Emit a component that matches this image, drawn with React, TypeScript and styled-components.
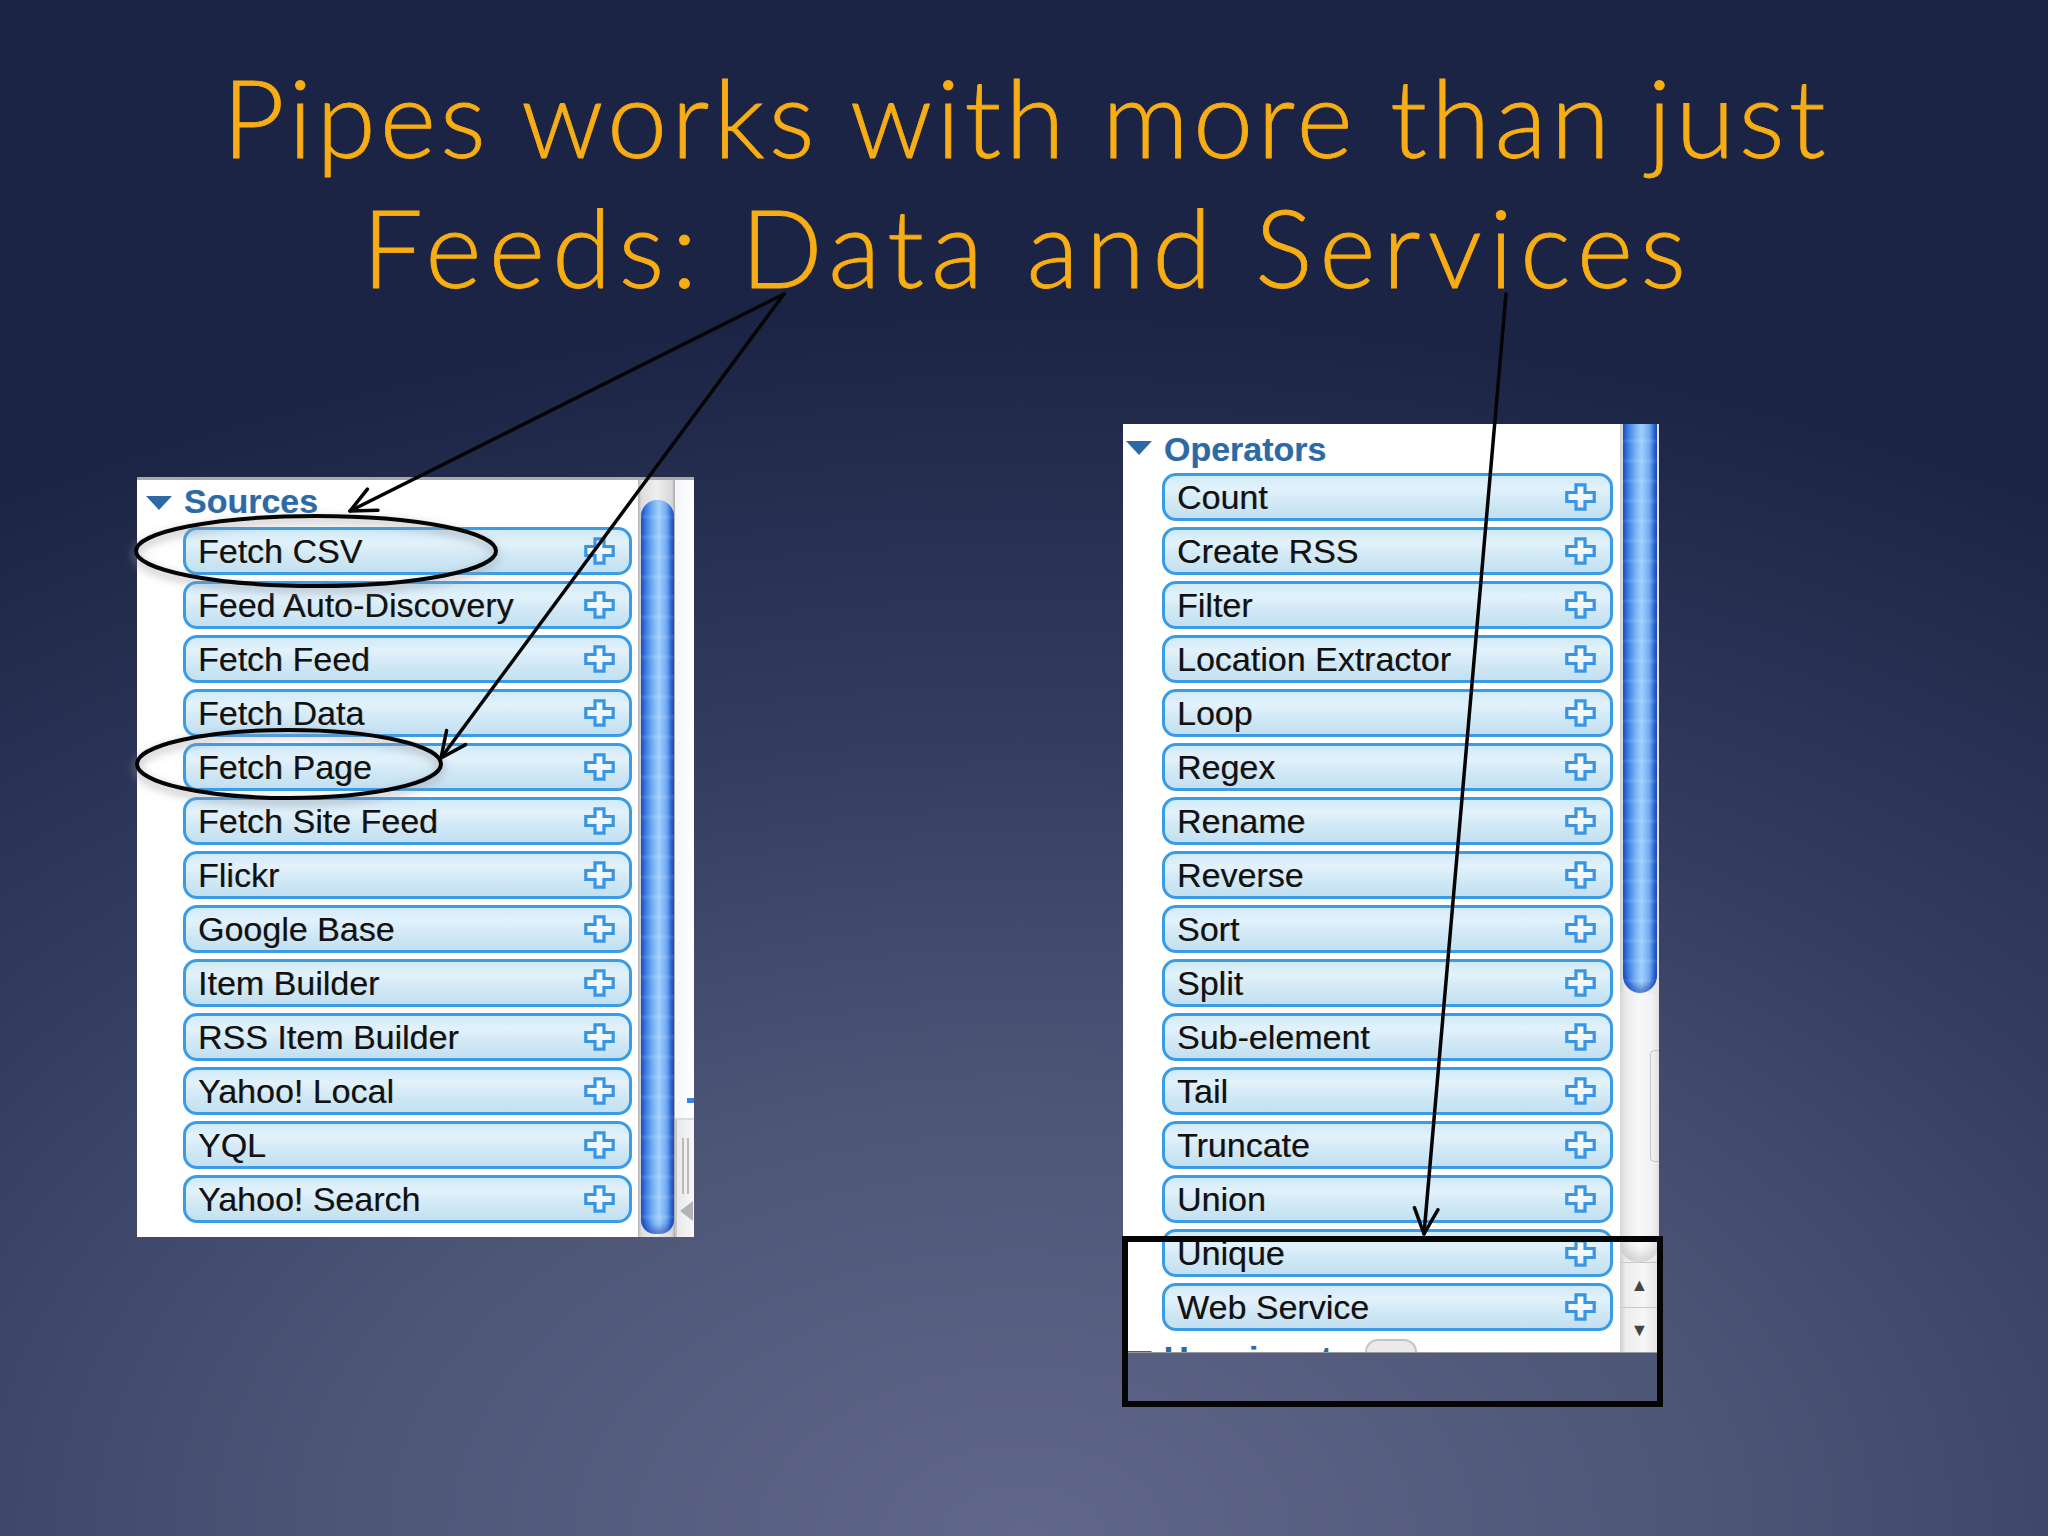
import React from "react";
import styled, { createGlobalStyle } from "styled-components";

const Global = createGlobalStyle`
  html, body { margin: 0; padding: 0; }
  body { width: 2048px; height: 1536px; overflow: hidden; background: #18203d; }
`;

const Slide = styled.div`
  position: relative;
  width: 2048px;
  height: 1536px;
  overflow: hidden;
  background:
    radial-gradient(ellipse 95% 80% at 50% 100%, #60678a 0%, #4e5678 35%, #343d60 65%, #1b2444 100%),
    #18203d;
  font-family: "Liberation Sans", Arial, sans-serif;
`;

const Title = styled.h1`
  margin: 0;
  padding-top: 51px;
  font-family: Lato, "Open Sans", sans-serif;
  font-weight: 300;
  font-size: 108px;
  line-height: 130px;
  color: #f7ad13;
  text-align: center;
  -webkit-text-stroke: 0.8px #f7ad13;
`;

const TitleLine = styled.span<{ $ls: number }>`
  display: block;
  letter-spacing: ${(p) => p.$ls}px;
  margin-right: -${(p) => p.$ls}px;
`;

const Content = styled.div`
  display: flex;
  align-items: flex-start;
  padding-left: 137px;
  margin-top: 113px;
`;

const Panel = styled.div<{ $mt: number; $ml: number; $w: number; $h: number; $left?: boolean }>`
  position: relative;
  box-sizing: border-box;
  display: flex;
  margin-top: ${(p) => p.$mt}px;
  margin-left: ${(p) => p.$ml}px;
  width: ${(p) => p.$w}px;
  height: ${(p) => p.$h}px;
  background: #ffffff;
  overflow: hidden;
  border-top: ${(p) => (p.$left ? "3px solid #a9a9ab" : "none")};
  border-bottom: ${(p) => (p.$left ? "none" : "1px solid #9a9aa0")};
`;

const List = styled.div<{ $pl: number; $pr: number }>`
  flex: 1;
  display: flex;
  flex-direction: column;
  padding-left: ${(p) => p.$pl}px;
  padding-right: ${(p) => p.$pr}px;
  min-width: 0;
`;

const Section = styled.div<{ $mt?: number }>`
  display: flex;
  flex-direction: column;
  margin-top: ${(p) => p.$mt ?? 0}px;
`;

const Header = styled.div<{ $h: number; $pt: number; $indent: number }>`
  display: flex;
  align-items: flex-start;
  gap: 12px;
  height: ${(p) => p.$h}px;
  box-sizing: border-box;
  padding-top: ${(p) => p.$pt}px;
  margin-left: ${(p) => p.$indent}px;
  font-weight: bold;
  font-size: 34px;
  line-height: 42px;
  color: #2d6aa4;
  text-shadow: 0 0 1px rgba(45, 106, 164, 0.4);
  white-space: nowrap;
`;

const Caret = styled.svg<{ $mt: number }>`
  flex: none;
  margin-top: ${(p) => p.$mt}px;
`;

const Rows = styled.div`
  display: flex;
  flex-direction: column;
  gap: 6px;
`;

const Row = styled.div`
  flex: none;
  box-sizing: border-box;
  height: 48px;
  display: flex;
  align-items: center;
  justify-content: space-between;
  padding: 0 14px 0 12px;
  border: 3px solid #3a9be6;
  border-radius: 14px;
  background: linear-gradient(180deg, #d1eaf8 0%, #e2f2fb 30%, #d2e9f6 60%, #c3e0f1 100%);
`;

const RowLabel = styled.span`
  font-size: 34px;
  line-height: 42px;
  color: #111111;
  white-space: nowrap;
  text-shadow: 0.6px 0 0 rgba(60, 45, 20, 0.45);
`;

const PlusIcon = styled.svg`
  flex: none;
  width: 31px;
  height: 28px;
`;

/* left scrollbar */
const LeftScroll = styled.div`
  flex: none;
  width: 56px;
  display: flex;
`;

const LeftTrack = styled.div`
  width: 37px;
  box-sizing: border-box;
  padding: 20px 1px 3px 3px;
  display: flex;
  background: linear-gradient(90deg, #b4b4b6 0%, #dedede 10%, #eeeeee 50%, #d8d8d8 92%, #a8a8a8 100%);
`;

const Thumb = styled.div<{ $radius: string }>`
  flex: 1;
  border-radius: ${(p) => p.$radius};
  background:
    repeating-linear-gradient(180deg, rgba(255, 255, 255, 0) 0px, rgba(255, 255, 255, 0) 14px, rgba(255, 255, 255, 0.12) 17px, rgba(255, 255, 255, 0) 20px),
    linear-gradient(90deg, #1f58c8 0%, #3c7de2 14%, #80b9f6 40%, #9fd0fc 55%, #6ea8f0 78%, #2f6bd6 92%, #1d52bd 100%);
  box-shadow: inset 0 -6px 6px rgba(10, 40, 160, 0.45);
`;

const SideStrip = styled.div`
  flex: 1;
  display: flex;
  flex-direction: column;
  justify-content: flex-end;
  background: linear-gradient(90deg, #f3f6f9 0%, #ffffff 100%);
`;

const BlueMark = styled.div`
  height: 5px;
  margin: 0 0 15px 12px;
  background: #3b82e6;
`;

const Grip = styled.div`
  position: relative;
  height: 119px;
  box-sizing: border-box;
  border-left: 2px solid #c9c9c9;
  border-top: 2px solid #dcdcdc;
  background: linear-gradient(90deg, #e9e9e9, #f7f7f7);
  display: flex;
  justify-content: center;
  gap: 3px;
  padding-top: 18px;
`;

const GripLine = styled.div`
  width: 2px;
  height: 56px;
  background: #b9b9b9;
`;

const GripArrow = styled.div`
  position: absolute;
  left: 3px;
  bottom: 16px;
  width: 0;
  height: 0;
  border-top: 10px solid transparent;
  border-bottom: 10px solid transparent;
  border-right: 13px solid #b3b3b3;
`;

/* right scrollbar */
const RightScroll = styled.div`
  flex: none;
  width: 39px;
  display: flex;
  flex-direction: column;
  background: linear-gradient(90deg, #cfcfcf 0%, #ececec 15%, #f7f7f7 60%, #e2e2e2 100%);
`;

const RightThumbWrap = styled.div`
  height: 569px;
  display: flex;
  padding-left: 3px;
  padding-right: 2px;
`;

const Trough = styled.div`
  position: relative;
  flex: 1;
  border-radius: 0 0 18px 18px;
  background: linear-gradient(90deg, #e4e4e4 0%, #f8f8f8 50%, #eeeeee 100%);
  box-shadow: inset 0 -8px 8px rgba(0, 0, 0, 0.12);
`;

const SideCapsule = styled.div`
  position: absolute;
  right: 0;
  top: 57px;
  width: 8px;
  height: 110px;
  border: 1px solid #c4c4c4;
  border-right: none;
  border-radius: 5px 0 0 5px;
`;

const ArrowBtn = styled.div`
  height: 44px;
  display: flex;
  align-items: center;
  justify-content: center;
  border-top: 1px solid #c8c8c8;
  font-size: 18px;
  color: #444;
`;

const Tab = styled.div`
  position: absolute;
  left: 242px;
  bottom: 0;
  width: 52px;
  height: 13px;
  box-sizing: border-box;
  border: 2px solid #c4c4c4;
  border-bottom: none;
  border-radius: 14px 14px 0 0;
  background: #eaeaea;
`;

const Overlay = styled.svg`
  position: absolute;
  left: 0;
  top: 0;
  pointer-events: none;
`;

const sources = [
  "Fetch CSV",
  "Feed Auto-Discovery",
  "Fetch Feed",
  "Fetch Data",
  "Fetch Page",
  "Fetch Site Feed",
  "Flickr",
  "Google Base",
  "Item Builder",
  "RSS Item Builder",
  "Yahoo! Local",
  "YQL",
  "Yahoo! Search",
];

const operators = [
  "Count",
  "Create RSS",
  "Filter",
  "Location Extractor",
  "Loop",
  "Regex",
  "Rename",
  "Reverse",
  "Sort",
  "Split",
  "Sub-element",
  "Tail",
  "Truncate",
  "Union",
  "Unique",
  "Web Service",
];

const Plus = () => (
  <PlusIcon viewBox="0 0 31 28">
    <defs>
      <linearGradient id="pg" x1="0" y1="0" x2="0" y2="1">
        <stop offset="0" stopColor="#ffffff" />
        <stop offset="1" stopColor="#e2effb" />
      </linearGradient>
    </defs>
    <polygon
      points="11,1.8 20,1.8 20,9.5 29.2,9.5 29.2,18.5 20,18.5 20,26.2 11,26.2 11,18.5 1.8,18.5 1.8,9.5 11,9.5"
      fill="url(#pg)"
      stroke="#3895e3"
      strokeWidth="3.2"
      strokeLinejoin="miter"
    />
  </PlusIcon>
);

const Tri = ({ mt }: { mt: number }) => (
  <Caret $mt={mt} width="26" height="14" viewBox="0 0 26 14">
    <polygon points="0,0 26,0 13,14" fill="#2d6aa4" />
  </Caret>
);

const ItemRow = ({ label }: { label: string }) => (
  <Row>
    <RowLabel>{label}</RowLabel>
    <Plus />
  </Row>
);

function arrowHead(tx: number, ty: number, fx: number, fy: number, len = 28, spread = 25) {
  const back = Math.atan2(fy - ty, fx - tx);
  const a = (spread * Math.PI) / 180;
  const p1 = [tx + len * Math.cos(back + a), ty + len * Math.sin(back + a)];
  const p2 = [tx + len * Math.cos(back - a), ty + len * Math.sin(back - a)];
  return `M${p1[0]},${p1[1]} L${tx},${ty} L${p2[0]},${p2[1]}`;
}

export default function App() {
  return (
    <>
      <Global />
      <Slide>
        <Title>
          <TitleLine $ls={4}>Pipes works with more than just</TitleLine>
          <TitleLine $ls={7}>Feeds: Data and Services</TitleLine>
        </Title>
        <Content>
          <Panel $left $mt={53} $ml={0} $w={557} $h={760}>
            <List $pl={46} $pr={6}>
              <Section>
                <Header $h={47} $pt={0} $indent={-37}>
                  <Tri mt={16} />
                  Sources
                </Header>
                <Rows>
                  {sources.map((s) => (
                    <ItemRow key={s} label={s} />
                  ))}
                </Rows>
              </Section>
            </List>
            <LeftScroll>
              <LeftTrack>
                <Thumb $radius="16px 16px 14px 14px" />
              </LeftTrack>
              <SideStrip>
                <BlueMark />
                <Grip>
                  <GripLine />
                  <GripLine />
                  <GripArrow />
                </Grip>
              </SideStrip>
            </LeftScroll>
          </Panel>

          <Panel $mt={0} $ml={429} $w={536} $h={929}>
            <List $pl={39} $pr={7}>
              <Section>
                <Header $h={49} $pt={4} $indent={-36}>
                  <Tri mt={13} />
                  Operators
                </Header>
                <Rows>
                  {operators.map((s) => (
                    <ItemRow key={s} label={s} />
                  ))}
                </Rows>
              </Section>
              <Section $mt={6}>
                <Header $h={49} $pt={0} $indent={-36}>
                  <Tri mt={14} />
                  User inputs
                </Header>
              </Section>
            </List>
            <RightScroll>
              <RightThumbWrap>
                <Thumb $radius="0 0 17px 17px" />
              </RightThumbWrap>
              <Trough>
                <SideCapsule />
              </Trough>
              <ArrowBtn>▲</ArrowBtn>
              <ArrowBtn>▼</ArrowBtn>
            </RightScroll>
            <Tab />
          </Panel>
        </Content>

        <Overlay width="2048" height="1536" viewBox="0 0 2048 1536">
          <defs>
            <filter id="glow" x="-20%" y="-50%" width="140%" height="200%">
              <feGaussianBlur stdDeviation="4" />
            </filter>
          </defs>
          <g fill="none" stroke="rgba(150,150,160,0.45)" strokeWidth="8" filter="url(#glow)">
            <ellipse cx="316" cy="555" rx="180" ry="35" />
            <ellipse cx="289" cy="768" rx="152" ry="34" />
          </g>
          <g fill="none" stroke="#050505" strokeWidth="4">
            <ellipse cx="316" cy="551" rx="180" ry="35" />
            <ellipse cx="289" cy="764" rx="152" ry="34" />
          </g>
          <g fill="none" stroke="#050505" strokeWidth="3.5" strokeLinecap="round" strokeLinejoin="round">
            <line x1="784" y1="294" x2="350" y2="511" />
            <path d={arrowHead(350, 511, 784, 294)} />
            <line x1="784" y1="294" x2="441" y2="758" />
            <path d={arrowHead(441, 758, 784, 294)} />
            <line x1="1506" y1="294" x2="1424" y2="1234" />
            <path d={arrowHead(1424, 1234, 1506, 294)} />
          </g>
          <rect x="1125" y="1239" width="535" height="165" fill="none" stroke="#050505" strokeWidth="6" />
        </Overlay>
      </Slide>
    </>
  );
}
